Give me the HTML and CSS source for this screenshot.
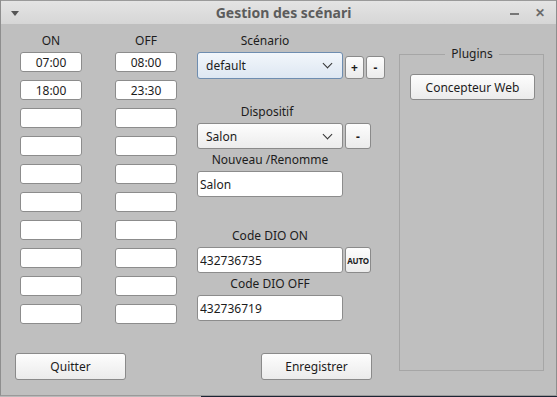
FILE: index.html
```html
<!DOCTYPE html>
<html lang="fr">

<head>
  <meta charset="UTF-8">
  <meta name="viewport" content="width=device-width, initial-scale=1.0">
  <title>Gestion des scénari</title>
  <link rel="stylesheet" href="styles.css">
</head>

<body>
  <div class="window">
    <div class="titlebar">
      <span class="menu-arrow"></span>
      <span class="title">Gestion des scénari</span>
      <span class="win-btn minimize"></span>
      <span class="win-btn close">&#x2715;</span>
    </div>

    <div class="content">
      <!-- Horaires ON / OFF -->
      <div class="left-col">
        <div class="times">
          <div class="col-head">ON</div>
          <div class="col-head">OFF</div>
          <input class="time" type="text" value="07:00">
          <input class="time" type="text" value="08:00">
          <input class="time" type="text" value="18:00">
          <input class="time" type="text" value="23:30">
          <input class="time" type="text"><input class="time" type="text">
          <input class="time" type="text"><input class="time" type="text">
          <input class="time" type="text"><input class="time" type="text">
          <input class="time" type="text"><input class="time" type="text">
          <input class="time" type="text"><input class="time" type="text">
          <input class="time" type="text"><input class="time" type="text">
          <input class="time" type="text"><input class="time" type="text">
          <input class="time" type="text"><input class="time" type="text">
        </div>
        <button class="btn btn-bottom" type="button">Quitter</button>
      </div>

      <!-- Scenario / dispositif -->
      <div class="mid-col">
        <div class="field-label label-scenario">Scénario</div>
        <div class="row">
          <div class="combo combo-focus">default <span class="chevron"></span></div>
          <button class="btn btn-small" type="button">+</button>
          <button class="btn btn-small" type="button">-</button>
        </div>

        <div class="field-label label-dispositif">Dispositif</div>
        <div class="row">
          <div class="combo combo-plain">Salon <span class="chevron"></span></div>
          <button class="btn btn-side" type="button">-</button>
        </div>

        <div class="field-label label-tight">Nouveau /Renomme</div>
        <div class="row">
          <input class="text-field" type="text" value="Salon">
        </div>

        <div class="field-label label-code">Code DIO ON</div>
        <div class="row">
          <input class="text-field" type="text" value="432736735">
          <button class="btn btn-side btn-auto" type="button">AUTO</button>
        </div>

        <div class="field-label label-tight">Code DIO OFF</div>
        <div class="row">
          <input class="text-field" type="text" value="432736719">
        </div>

        <button class="btn btn-bottom btn-save" type="button">Enregistrer</button>
      </div>

      <!-- Plugins -->
      <fieldset class="group">
        <legend>Plugins</legend>
        <button class="btn btn-plugin" type="button">Concepteur Web</button>
      </fieldset>
    </div>
  </div>
  <div class="desktop"></div>
</body>

</html>
```

FILE: styles.css
```css
html,
body {
  margin: 0;
  padding: 0;
}

body {
  background-color: #b9b9b9;
  font-family: "Noto Sans", "Open Sans", sans-serif;
  font-size: 12px;
  color: #1c1c1c;
  width: 557px;
  height: 397px;
  overflow: hidden;
  position: relative;
}

.window {
  width: 557px;
  height: 396px;
  box-sizing: border-box;
  background-color: #bfbfbf;
  border-left: 1px solid #8e8e8e;
  border-right: 1px solid #8e8e8e;
  border-bottom: 1px solid #9a9a9a;
  display: flex;
  flex-direction: column;
}

.desktop {
  position: absolute;
  left: 201px;
  right: 0;
  bottom: 0;
  height: 1px;
  background-color: #1b2534;
}

/* title bar */
.titlebar {
  height: 24px;
  flex: none;
  display: flex;
  align-items: center;
  background: linear-gradient(#e4e4e4, #d6d6d6);
  border-top: 1px solid #9a9a9a;
  box-sizing: border-box;
  padding: 0 11px 0 10px;
}

.menu-arrow {
  width: 0;
  height: 0;
  border-left: 4px solid transparent;
  border-right: 4px solid transparent;
  border-top: 5px solid #555;
  margin-top: 1px;
}

.title {
  flex: 1;
  text-align: center;
  font-weight: bold;
  font-size: 14px;
  color: #5c5c5c;
  padding-left: 38px;
}

.win-btn {
  color: #6a6a6a;
  font-size: 12px;
  font-weight: bold;
}

.minimize {
  width: 9px;
  height: 2px;
  background-color: #777;
  margin-right: 16px;
  margin-top: 2px;
}

/* layout */
.content {
  flex: 1;
  display: flex;
  padding: 9px 11px 15px 14px;
}

.left-col {
  width: 163px;
  display: flex;
  flex-direction: column;
}

.times {
  display: grid;
  grid-template-columns: 62px 62px;
  column-gap: 33px;
  row-gap: 8px;
  padding-left: 5px;
}

.col-head {
  text-align: center;
  line-height: 16px;
  margin-bottom: -5px;
}

input {
  font-family: inherit;
  font-size: 12px;
  color: #1c1c1c;
  box-sizing: border-box;
  background-color: #fff;
  border: 1px solid #8c8c8c;
  border-radius: 3px;
  margin: 0;
  outline: none;
}

.time {
  width: 62px;
  height: 20px;
  padding: 0;
  text-align: center;
}

.btn {
  font-family: inherit;
  font-size: 12px;
  color: #1c1c1c;
  background: linear-gradient(#fdfdfd, #ebebeb);
  border: 1px solid #8a8a8a;
  border-radius: 3px;
  padding: 0;
  margin: 0;
  box-sizing: border-box;
}

.btn-bottom {
  margin-top: auto;
  width: 111px;
  height: 27px;
}

.mid-col {
  width: 188px;
  margin-left: 19px;
  display: flex;
  flex-direction: column;
}

.field-label {
  width: 146px;
  text-align: center;
  line-height: 16px;
  margin-bottom: 3px;
}

.label-scenario {
  width: 136px;
}

.label-dispositif {
  width: 140px;
  margin-top: 25px;
  margin-bottom: 3px;
}

.label-tight {
  margin-top: 3px;
}

.label-code {
  margin-top: 31px;
}

.row {
  display: flex;
  align-items: flex-end;
}

.combo {
  width: 146px;
  height: 27px;
  box-sizing: border-box;
  border-radius: 3px;
  padding: 0 8px;
  display: flex;
  align-items: center;
  justify-content: space-between;
}

.combo-focus {
  border: 1px solid #6e8db0;
  background: linear-gradient(#f2f6fb, #dde7f2);
}

.combo-plain {
  height: 26px;
  border: 1px solid #8a8a8a;
  background: linear-gradient(#fdfdfd, #ececec);
}

.chevron {
  width: 6px;
  height: 6px;
  border-right: 1.5px solid #333;
  border-bottom: 1.5px solid #333;
  transform: rotate(45deg);
  margin-top: -4px;
  margin-right: 3px;
}

.btn-small {
  width: 19px;
  height: 23px;
  margin-left: 2px;
  font-weight: bold;
}

.btn-side {
  width: 26px;
  height: 26px;
  margin-left: 2px;
  font-weight: bold;
}

.btn-auto {
  font-size: 8px;
  letter-spacing: -0.2px;
}

.text-field {
  width: 146px;
  height: 26px;
  padding: 0 2px;
}

.btn-save {
  margin-left: 64px;
}

/* plugins group */
.group {
  margin: 13px 0 0 14px;
  padding: 12px 9px 0 10px;
  width: 145px;
  height: 325px;
  box-sizing: border-box;
  border: 1px solid #a6a6a6;
  border-radius: 0;
  min-width: 0;
}

.group legend {
  margin: 0 auto;
  padding: 0 6px;
  line-height: 16px;
}

.btn-plugin {
  width: 125px;
  height: 26px;
  display: block;
}
```
